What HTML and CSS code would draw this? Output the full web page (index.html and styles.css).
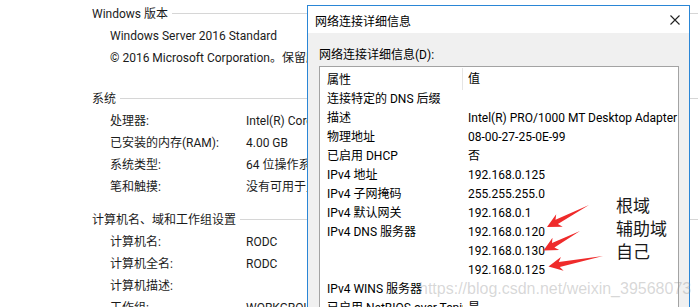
FILE: index.html
```html
<!DOCTYPE html>
<html lang="zh-CN">
<head>
    <meta charset="UTF-8">
    <meta name="viewport" content="width=device-width, initial-scale=1.0">
    <title>系统 - 网络连接详细信息</title>
    <link rel="stylesheet" href="styles.css">
</head>
<body>

    <!-- System page behind the dialog -->
    <div class="sysinfo">
        <div class="section first">
            <div class="section-title">Windows 版本</div>
            <div class="row"><span>Windows Server 2016 Standard</span></div>
            <div class="row"><span>© 2016 Microsoft Corporation。保留所有权利。</span></div>
        </div>
        <div class="section">
            <div class="section-title">系统</div>
            <div class="row"><span>处理器:</span><span>Intel(R) Core(TM) i5-4590 CPU @ 3.30GHz</span></div>
            <div class="row"><span>已安装的内存(RAM):</span><span>4.00 GB</span></div>
            <div class="row"><span>系统类型:</span><span>64 位操作系统，基于 x64 的处理器</span></div>
            <div class="row"><span>笔和触摸:</span><span>没有可用于此显示器的笔或触控输入</span></div>
        </div>
        <div class="section">
            <div class="section-title">计算机名、域和工作组设置</div>
            <div class="row"><span>计算机名:</span><span>RODC</span></div>
            <div class="row"><span>计算机全名:</span><span>RODC</span></div>
            <div class="row"><span>计算机描述:</span><span></span></div>
            <div class="row"><span>工作组:</span><span>WORKGROUP</span></div>
        </div>
    </div>

    <!-- Network connection details dialog -->
    <div class="dialog">
        <div class="titlebar">
            <span>网络连接详细信息</span>
            <svg class="close-icon" width="10" height="10" viewBox="0 0 10 10">
                <path d="M0.5 0.5 L9.5 9.5 M9.5 0.5 L0.5 9.5" stroke="#222" stroke-width="1.1" fill="none"/>
            </svg>
        </div>
        <div class="dialog-body">
            <p class="list-label">网络连接详细信息(D):</p>
            <div class="listview">
                <div class="list-head">
                    <span>属性</span>
                    <span>值</span>
                </div>
                <div class="list-row"><span>连接特定的 DNS 后缀</span><span></span></div>
                <div class="list-row"><span>描述</span><span>Intel(R) PRO/1000 MT Desktop Adapter</span></div>
                <div class="list-row"><span>物理地址</span><span>08-00-27-25-0E-99</span></div>
                <div class="list-row"><span>已启用 DHCP</span><span>否</span></div>
                <div class="list-row"><span>IPv4 地址</span><span>192.168.0.125</span></div>
                <div class="list-row"><span>IPv4 子网掩码</span><span>255.255.255.0</span></div>
                <div class="list-row"><span>IPv4 默认网关</span><span>192.168.0.1</span></div>
                <div class="list-row"><span>IPv4 DNS 服务器</span><span>192.168.0.120</span></div>
                <div class="list-row"><span></span><span>192.168.0.130</span></div>
                <div class="list-row"><span></span><span>192.168.0.125</span></div>
                <div class="list-row"><span>IPv4 WINS 服务器</span><span></span></div>
                <div class="list-row"><span>已启用 NetBIOS over Tcpip</span><span>是</span></div>
            </div>
        </div>
    </div>

    <!-- Annotations drawn on top -->
    <svg class="arrows" width="698" height="307" viewBox="0 0 698 307">
        <polygon points="589,205 555.5,219.7 556.2,214.3 547,227 562.7,226.7 557.9,224.1"/>
        <polygon points="580,231 552,243.1 552.5,237.7 543.5,250.5 559.2,250.1 554.4,247.5"/>
        <polygon points="603,256 558.8,262 560.9,257 548.5,266.5 563.6,270.7 559.8,266.9"/>
    </svg>
    <div class="notes">
        <div>根域</div>
        <div>辅助域</div>
        <div>自己</div>
    </div>
    <div class="watermark">https://blog.csdn.net/weixin_39568073</div>

</body>
</html>
```

FILE: styles.css
```css
/* Basic reset and page layout */
* {
    margin: 0;
    padding: 0;
    box-sizing: border-box;
}

body {
    position: relative;
    width: 698px;
    height: 307px;
    overflow: hidden;
    background-color: #fff;
    font-family: Roboto, "Noto Sans CJK SC", sans-serif;
    font-size: 12px;
    color: #1b1b1b;
}

/* System info page */
.sysinfo {
    padding: 2px 0 0 92px;
}

.section {
    margin-top: 10px;
}

.section.first {
    margin-top: 0;
    margin-bottom: 18px;
}

.section-title {
    display: flex;
    align-items: center;
    height: 20px;
    margin-bottom: 3px;
    white-space: nowrap;
}

.section-title::after {
    content: "";
    flex: 1;
    margin: 3px 0 0 4px;
    border-top: 1px solid #d6d6d6;
}

.row {
    display: grid;
    grid-template-columns: 136px auto;
    height: 22px;
    line-height: 22px;
    padding-left: 18px;
    white-space: nowrap;
}

/* Dialog window */
.dialog {
    position: absolute;
    left: 307px;
    top: 5px;
    width: 383px;
    height: 320px;
    border: 1px solid #2a86d6;
    background-color: #f0f0f0;
    color: #000;
}

.titlebar {
    display: flex;
    justify-content: space-between;
    align-items: center;
    height: 27px;
    padding: 1px 9px 0 7px;
    background-color: #fff;
}

.close-icon {
    display: block;
}

.dialog-body {
    padding: 14px 10px 0 11px;
}

.list-label {
    line-height: 17px;
    margin-bottom: 2px;
}

.listview {
    width: 360px;
    height: 260px;
    border: 1px solid #a3a3a3;
    background-color: #fff;
    overflow: hidden;
}

.list-head,
.list-row {
    display: grid;
    grid-template-columns: 143px 1fr;
    white-space: nowrap;
}

.list-head {
    height: 23px;
    align-items: center;
}

.list-head span {
    line-height: 21px;
    padding-top: 2px;
}

.list-head span:first-child {
    height: 22px;
    border-right: 1px solid #e5e5e5;
}

.list-row {
    height: 19px;
    line-height: 19px;
}

.list-head span,
.list-row span {
    padding-left: 7px;
    overflow: hidden;
}

.list-head span + span,
.list-row span + span {
    padding-left: 5px;
}

/* Red arrows and notes */
.arrows {
    position: absolute;
    left: 0;
    top: 0;
    pointer-events: none;
}

.arrows polygon {
    fill: #ef2b2b;
}

.notes {
    position: absolute;
    left: 616px;
    top: 193px;
    font-family: "Noto Sans CJK SC", sans-serif;
    font-size: 17px;
    line-height: 23px;
    color: #1a1a1a;
}

.watermark {
    position: absolute;
    left: 419px;
    top: 280px;
    font-family: "Liberation Sans", Arial, sans-serif;
    font-size: 16px;
    line-height: 18px;
    color: rgba(140, 140, 140, 0.35);
    white-space: nowrap;
}
```
